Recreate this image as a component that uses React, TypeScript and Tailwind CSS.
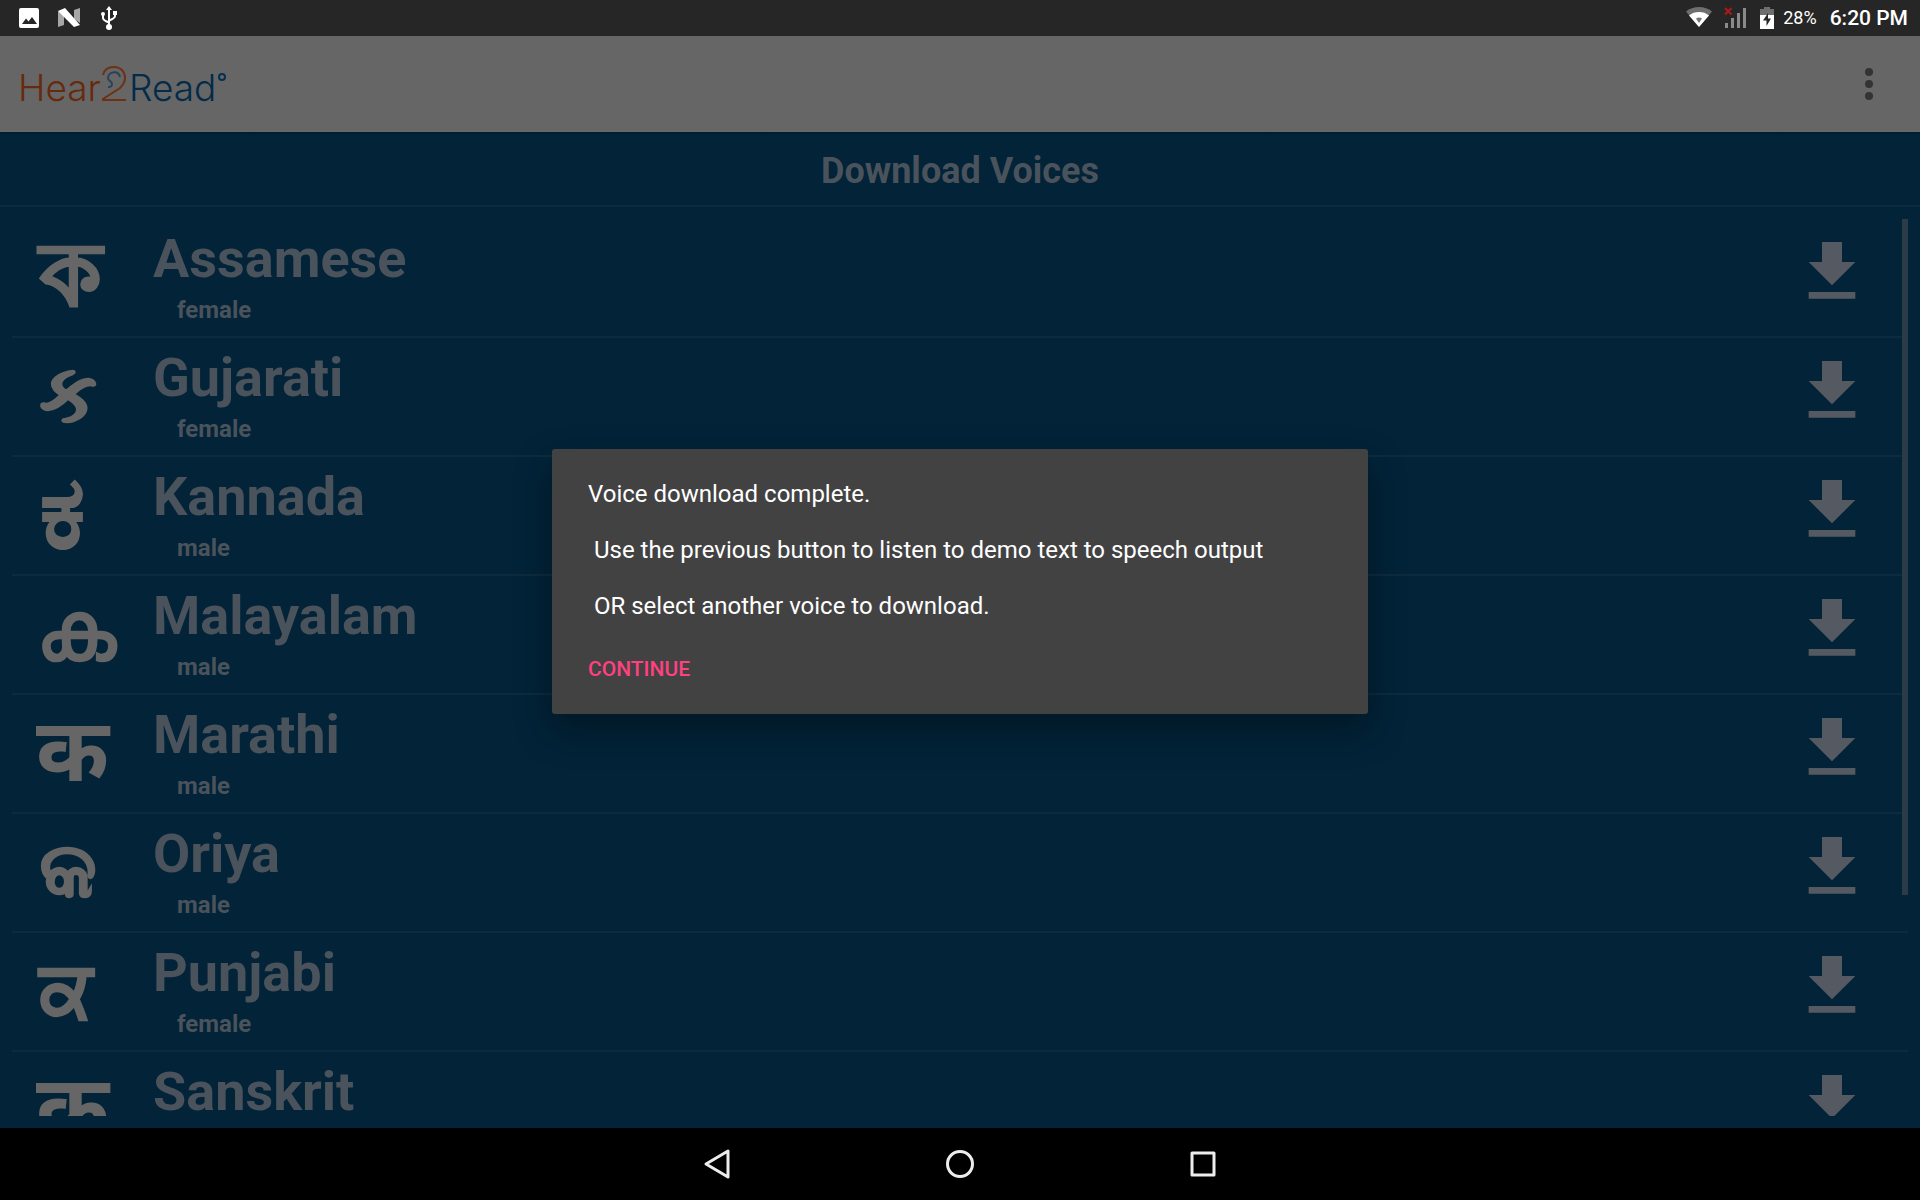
import React from "react";

type Voice = { name: string; gender: string; letter: string; lang: string; size: string };

const voices: Voice[] = [
  { name: "Assamese", gender: "female", letter: "ক", lang: "as", size: "pl-1 text-[88px] [-webkit-text-stroke:2px]" },
  { name: "Gujarati", gender: "female", letter: "ક", lang: "gu", size: "pl-1 text-[80px] [-webkit-text-stroke:2px]" },
  { name: "Kannada", gender: "male", letter: "ಕ", lang: "kn", size: "pl-1 text-[100px] [-webkit-text-stroke:1px]" },
  { name: "Malayalam", gender: "male", letter: "ക", lang: "ml", size: "text-[84px]" },
  { name: "Marathi", gender: "male", letter: "क", lang: "mr", size: "text-[88px]" },
  { name: "Oriya", gender: "male", letter: "କ", lang: "or", size: "pl-1 text-[76px] [-webkit-text-stroke:2px]" },
  { name: "Punjabi", gender: "female", letter: "ਕ", lang: "pa", size: "pl-1 text-[76px] [-webkit-text-stroke:2px]" },
  { name: "Sanskrit", gender: "male", letter: "क", lang: "sa", size: "text-[88px]" },
];

function StatusBar() {
  return (
    <div className="flex h-9 shrink-0 items-center justify-between bg-[#262626] pr-3 pl-[18px] text-white">
      <div className="flex items-center gap-[18px]">
        <svg className="size-[22px]" viewBox="0 0 22 22" aria-label="Screenshot saved">
          <path fill="#fff" fillRule="evenodd" d="M3 1h16a2 2 0 0 1 2 2v16a2 2 0 0 1-2 2H3a2 2 0 0 1-2-2V3a2 2 0 0 1 2-2zm1 16h15l-5-7-3.500 4.500-2.500-3z" />
        </svg>
        <svg className="h-[22px] w-[24px]" viewBox="0 0 24 22" aria-label="System update">
          <path fill="#a6a6a6" d="M0 4l6 4v10l-6 2zM22 1v15l-6-4V3z" />
          <path fill="#fff" d="M0 4l7-3 15 17-6 2z" />
        </svg>
        <svg className="h-6 w-[18px]" viewBox="0 0 18 24" aria-label="USB connected" fill="none" stroke="#fff" strokeWidth="2">
          <path d="M9 3v17M3 9v3c0 2 2 3 6 4.500M15 7v3c0 2-2 3-6 4.500" />
          <path fill="#fff" stroke="none" d="M9 0l3 4H6zM13 5h4v4h-4z" />
          <circle cx="3" cy="8" r="2" fill="#fff" stroke="none" />
          <circle cx="9" cy="21" r="3" fill="#fff" stroke="none" />
        </svg>
      </div>
      <div className="flex items-center">
        <svg className="h-[22px] w-[26px]" viewBox="0 0 26 22" aria-label="Wi-Fi">
          <path fill="#6e6e6e" d="M0 4.500C3.500 1.500 8 0 13 0S22.500 1.500 26 4.500L13 20z" />
          <path fill="#fff" d="M3 8.500C6 6 9 5 13 5s7 1 10 3.500L13 20z" />
          <path fill="#777" d="M10 11.500q3-2 6 0L13 16z" />
        </svg>
        <svg className="ml-3 h-[22px] w-[23px]" viewBox="0 0 23 22" aria-label="No signal">
          <path fill="#8a8a8a" d="M1 16h3v5H1zM7 11h3v10H7zM13 6h3v15h-3zM19 1h3v20h-3z" />
          <path stroke="#b01818" strokeWidth="2" d="M1 1l6.500 6.500M7.500 1L1 7.500" />
        </svg>
        <svg className="ml-[13px] h-[22px] w-[14px]" viewBox="0 0 14 22" aria-label="Battery charging">
          <path fill="#6e6e6e" d="M4 0h6v2h4v7H0V2h4z" />
          <path fill="#fff" d="M0 8h14v14H0z" />
          <path fill="#262626" d="M8 6L3 13.500h3.500V19L11 11.500H8z" />
        </svg>
        <span className="ml-[9px] text-[18px] leading-6">28%</span>
        <span className="ml-[13px] text-[21px] leading-6 font-medium">6:20 PM</span>
      </div>
    </div>
  );
}

function Logo() {
  return (
    <svg className="h-[52px] w-[212px]" viewBox="0 0 212 52" role="img" aria-label="Hear2Read">
      <g fontFamily="Inter, sans-serif" fontSize="37" fontWeight="300">
        <text x="0" y="43" fill="#662a0c">Hear</text>
        <text x="111" y="43" fill="#042b48">Read</text>
      </g>
      <path fill="none" stroke="#6d3213" strokeWidth="2" d="M85 17c1-5 5-8 11-8 7 0 11 5 11 11 0 4-2 7-5 10L85 41v1h23" />
      <path fill="none" stroke="#2a4257" strokeWidth="2" d="M102 19c-1-4-4-5-7-4.500-3 .5-5 3-5 5.500 0 3 4 3 4 6 0 2-2 3-4 3" />
      <circle cx="204" cy="19" r="3" fill="none" stroke="#06304e" strokeWidth="2" />
    </svg>
  );
}

function VoiceRow({ voice }: { voice: Voice }) {
  return (
    <li className="flex h-[119px] shrink-0 items-start border-b-2 border-[#0e2b3d] pr-9 pl-6">
      <span lang={voice.lang} className={"mt-[13px] w-[117px] leading-[86px] font-bold text-[#666666] " + voice.size}>
        {voice.letter}
      </span>
      <div className="flex-1 font-bold text-[#4a535b]">
        <h2 className="mt-2 text-[54px] leading-16">{voice.name}</h2>
        <p className="mt-[5px] pl-6 text-[24px] leading-7">{voice.gender}</p>
      </div>
      <button type="button" aria-label={"Download " + voice.name} className="mt-[13px] size-20">
        <svg viewBox="0 0 24 24" fill="#555961">
          <path d="M19 9h-4V3H9v6H5l7 7 7-7zM5 18v2h14v-2H5z" />
        </svg>
      </button>
    </li>
  );
}

export default function App() {
  return (
    <div className="flex h-screen flex-col overflow-hidden bg-black font-['Roboto','Noto_Sans',sans-serif]">
      <StatusBar />
      <div className="relative flex min-h-0 flex-1 flex-col bg-[#022338]">
        <header className="flex h-24 shrink-0 items-center justify-between bg-[#666666] pr-[19px] pl-[18px]">
          <Logo />
          <button type="button" aria-label="More options" className="flex h-12 w-16 items-center justify-center">
            <svg className="h-8 w-2" viewBox="0 0 8 32" fill="#333">
              <circle cx="4" cy="4" r="4" />
              <circle cx="4" cy="16" r="4" />
              <circle cx="4" cy="28" r="4" />
            </svg>
          </button>
        </header>
        <div className="h-1 shrink-0 bg-linear-to-b from-[#001c2e] to-[#022338]" />
        <h1 className="flex h-[71px] shrink-0 items-center justify-center border-b-2 border-[#0e2b3d] text-[36px] leading-10 font-bold text-[#4a535b]">
          Download Voices
        </h1>
        <main className="relative m-3 min-h-0 flex-1 overflow-hidden">
          <ul className="flex flex-col">
            {voices.map((v) => (
              <VoiceRow key={v.name} voice={v} />
            ))}
          </ul>
          <div className="absolute top-0 right-0 h-[75.4%] w-1.5 bg-[#2b3c48]" />
        </main>
        <div className="absolute inset-0 flex items-center justify-center pb-0.5">
          <div role="dialog" aria-modal="true" aria-labelledby="message" className="w-[816px] rounded-[3px] bg-[#424242] px-9 pt-[31px] pb-[19px] shadow-[0_16px_36px_rgba(0,0,0,0.35)]">
            <div id="message" className="text-[24px] leading-7 whitespace-pre-wrap text-white">
              <p>Voice download complete.</p>
              <p className="mt-7"> Use the previous button to listen to demo text to speech output</p>
              <p className="mt-7"> OR select another voice to download.</p>
            </div>
            <button type="button" className="mt-[23px] flex h-[52px] items-center text-[21px] leading-6 font-medium text-[#ff4081]">
              CONTINUE
            </button>
          </div>
        </div>
      </div>
      <nav className="flex h-[72px] shrink-0 items-center justify-center gap-[211px]">
        <button type="button" aria-label="Back" className="size-8">
          <svg viewBox="0 0 32 32" fill="none" stroke="#ededed" strokeWidth="3" strokeLinejoin="round">
            <path d="M27 3v26L5 16z" />
          </svg>
        </button>
        <button type="button" aria-label="Home" className="size-8">
          <svg viewBox="0 0 32 32" fill="none" stroke="#ededed" strokeWidth="3">
            <circle cx="16" cy="16" r="12.500" />
          </svg>
        </button>
        <button type="button" aria-label="Recent apps" className="size-8">
          <svg viewBox="0 0 32 32" fill="none" stroke="#ededed" strokeWidth="3" strokeLinejoin="round">
            <path d="M5 5h22v22H5z" />
          </svg>
        </button>
      </nav>
    </div>
  );
}
